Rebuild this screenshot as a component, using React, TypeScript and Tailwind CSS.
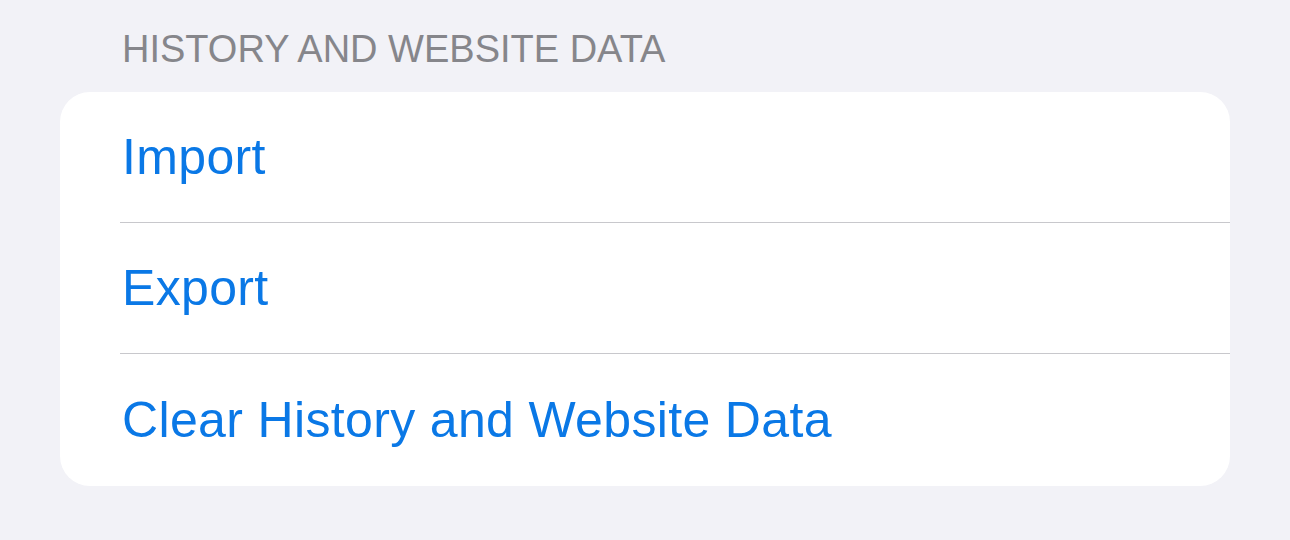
import React from 'react';

const rows = ['Import', 'Export', 'Clear History and Website Data'];

export default function App() {
  return (
    <div
      className="w-full h-[540px] bg-[#f2f2f7] px-[60px] pt-[30px]"
      style={{ fontFamily: '"Liberation Sans", Arial, sans-serif' }}
    >
      {/* Section header */}
      <div className="pl-[62px] text-[38px] leading-none text-[#86868b] h-[38px]">
        HISTORY AND WEBSITE DATA
      </div>

      {/* Grouped list */}
      <div className="mt-[24px] bg-white rounded-[30px] overflow-hidden">
        {rows.map((label, i) => (
          <div key={label} className="pl-[60px]">
            <div
              className={`flex items-center ${
                i < rows.length - 1 ? 'h-[131px] border-b border-[#c8c8cc]' : 'h-[132px]'
              }`}
            >
              <span className="ml-[2px] text-[50px] leading-none tracking-[0.35px] text-[#0a78e6]">
                {label}
              </span>
            </div>
          </div>
        ))}
      </div>
    </div>
  );
}
